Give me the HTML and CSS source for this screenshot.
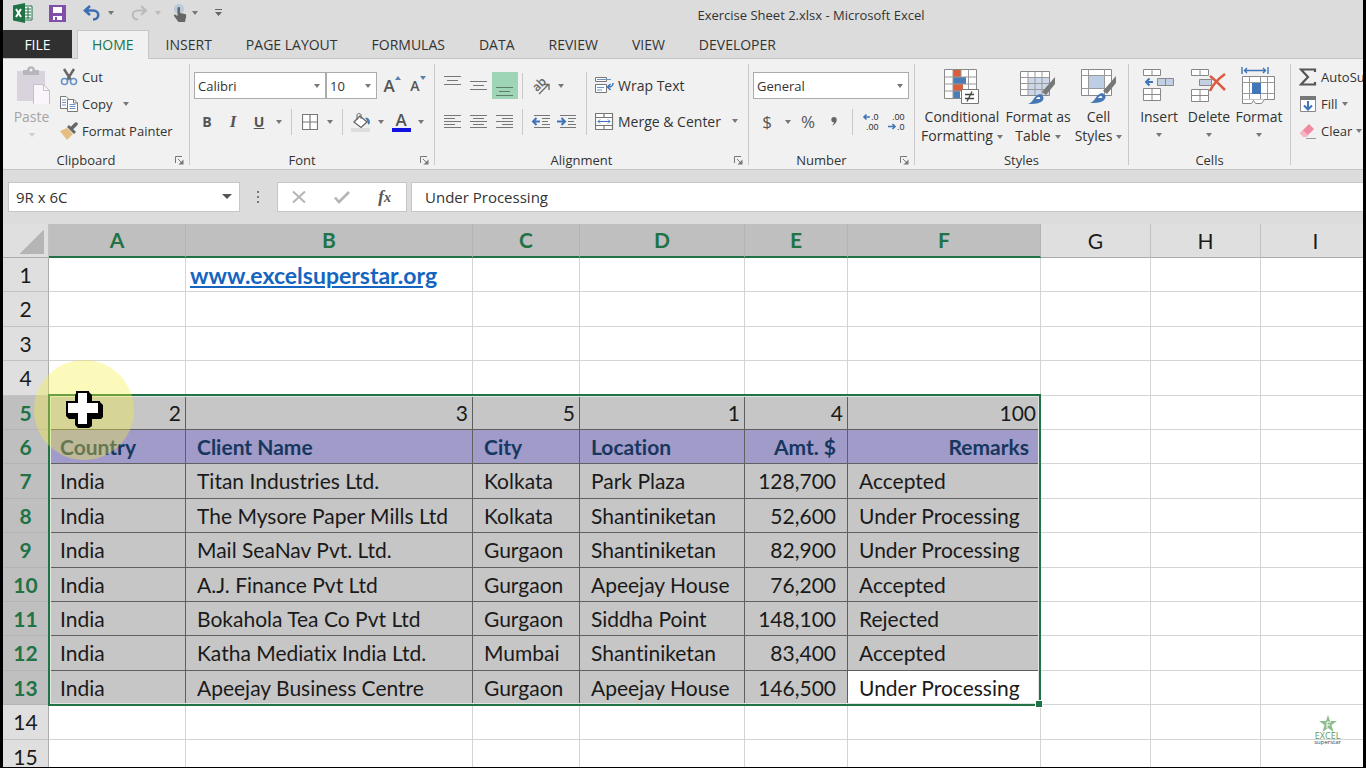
FILE: index.html
```html
<!DOCTYPE html>
<html lang="en">
<head>
    <meta charset="UTF-8">
    <meta name="viewport" content="width=device-width, initial-scale=1.0">
    <title>Exercise Sheet 2.xlsx - Microsoft Excel</title>
    <link rel="stylesheet" href="styles.css">
</head>
<body>
    <div class="app">
        <!-- Title bar -->
        <header class="titlebar">
            <div class="quick-access">
                <svg class="app-icon" width="20" height="20" viewBox="0 0 20 20"><path d="M11 3h8v14h-8z" fill="#fff" stroke="#1f7244"/><path d="M12 6h6M12 9h6M12 12h6M12 15h6M15 4v12" stroke="#1f7244"/><path d="M0 2.500 12 0v20L0 17.500z" fill="#1f7244"/><path d="M3 6l5 8M8 6l-5 8" stroke="#fff" stroke-width="2"/></svg>
                <button class="qa-btn save" aria-label="Save"><svg width="17" height="17" viewBox="0 0 17 17"><path d="M1 1h15v15H1z" fill="#fff" stroke="#8050a8" stroke-width="2"/><path d="M1 1h3v7h9V1h3v15h-3v-5H4v5H1z" fill="#8050a8"/><path d="M6 12h2v4H6z" fill="#8050a8"/></svg></button>
                <button class="qa-btn undo" aria-label="Undo"><svg width="18" height="16" viewBox="0 0 18 16"><path d="M7 1 2 5.500 7 10M2.500 5.500H10c7 0 7 9 0 9" fill="none" stroke="#3c6eb4" stroke-width="2.600"/></svg><span class="caret"></span></button>
                <button class="qa-btn redo" aria-label="Redo" disabled><svg width="18" height="16" viewBox="0 0 18 16"><path d="M11 1l5 4.500L11 10M15.500 5.500H8c-7 0-7 9 0 9" fill="none" stroke="#bbb" stroke-width="2.200"/></svg><span class="caret"></span></button>
                <button class="qa-btn touch" aria-label="Touch mode"><svg width="16" height="20" viewBox="0 0 16 20"><circle cx="7" cy="6" r="5" fill="#b9cadb"/><path d="M5.500 5c0-1.500 2.500-1.500 2.500 0v5l5 1c1 .3 1.300 1 1.200 2L13 19H6.500L2 13c-.5-1 .5-2 1.500-1.200l2 1.200z" fill="#666"/></svg><span class="caret"></span></button>
                <button class="qa-btn" aria-label="Customize toolbar"><svg width="8" height="8" viewBox="0 0 8 8"><path d="M0 .5h7" stroke="#666"/><path d="M0 3h7L3.500 7z" fill="#666"/></svg></button>
            </div>
            <h1 class="title">Exercise Sheet 2.xlsx - Microsoft Excel</h1>
        </header>

        <!-- Ribbon tabs -->
        <nav class="tabs">
            <button class="tab tab-file">FILE</button>
            <button class="tab active">HOME</button>
            <button class="tab">INSERT</button>
            <button class="tab">PAGE LAYOUT</button>
            <button class="tab">FORMULAS</button>
            <button class="tab">DATA</button>
            <button class="tab">REVIEW</button>
            <button class="tab">VIEW</button>
            <button class="tab">DEVELOPER</button>
        </nav>

        <!-- Ribbon -->
        <section class="ribbon">
            <div class="group clipboard">
                <div class="group-body">
                    <button class="big-btn paste" disabled>
                        <svg width="36" height="38" viewBox="0 0 36 38"><path d="M3 5h28v30H3z" fill="#d8d3dc"/><path d="M9 4h4c0-5 8-5 8 0h4v5H9z" fill="#b9b5bc"/><circle cx="17" cy="4" r="1.500" fill="#f1f1f1"/><path d="M19.500 18.500h10l6 6v14h-16z" fill="#faf5fb" stroke="#c5bfc8"/><path d="M29.500 18.500v6h6" fill="none" stroke="#c5bfc8"/></svg>
                        <span>Paste</span>
                        <span class="caret"></span>
                    </button>
                    <div class="list">
                        <button class="list-btn"><svg width="18" height="18" viewBox="0 0 18 18"><path d="M4 1l7 11M14 1L7 12" stroke="#666" stroke-width="2.400"/><circle cx="4.500" cy="13.500" r="3" fill="none" stroke="#6b93c6" stroke-width="1.600"/><circle cx="13.500" cy="13.500" r="3" fill="none" stroke="#6b93c6" stroke-width="1.600"/></svg>Cut</button>
                        <button class="list-btn"><svg width="18" height="18" viewBox="0 0 18 18"><path d="M.5 1.500H6l3 3v9H.5z" fill="#fff" stroke="#777"/><path d="M2 5h4M2 7.500h4M2 10h4" stroke="#6b93c6"/><path d="M7.500 4.500H14l3.500 3.500v8.500h-10z" fill="#fff" stroke="#777"/><path d="M13.500 4.500V8h4" fill="none" stroke="#777"/><path d="M9.500 9.500h6M9.500 11.500h6M9.500 13.500h6" stroke="#6b93c6"/></svg>Copy<span class="caret"></span></button>
                        <button class="list-btn"><svg width="18" height="18" viewBox="0 0 18 18"><path d="M0 9l7-3 6 6-6 6z" fill="#e6be80"/><path d="M7 5l2-2 7 7-2 2z" fill="#666"/><path d="M12 6l4-4" stroke="#666" stroke-width="3.500" stroke-linecap="round"/></svg>Format Painter</button>
                    </div>
                </div>
                <footer class="group-name">Clipboard<button class="launcher" aria-label="Clipboard options"><svg width="9" height="9" viewBox="0 0 9 9"><path d="M.5 7V.5H7M3 3l3 3" fill="none" stroke="#777"/><path d="M8.500 3.500v5h-5z" fill="#777"/></svg></button></footer>
            </div>

            <div class="group font">
                <div class="group-body rows">
                    <div class="row">
                        <div class="combo font-name"><select aria-label="Font"><option>Calibri</option></select></div>
                        <div class="combo font-size"><select aria-label="Font size"><option>10</option></select></div>
                        <button class="tool grow" aria-label="Increase font size"><span class="letter">A</span><svg width="6" height="4" viewBox="0 0 6 4"><path d="M0 4l3-4 3 4z" fill="#5c7fae"/></svg></button>
                        <button class="tool shrink" aria-label="Decrease font size"><span class="letter">A</span><svg width="6" height="4" viewBox="0 0 6 4"><path d="M0 0h6L3 4z" fill="#5c7fae"/></svg></button>
                    </div>
                    <div class="row">
                        <button class="tool"><b>B</b></button>
                        <button class="tool italic"><i>I</i></button>
                        <button class="tool underline"><u>U</u></button>
                        <button class="drop" aria-label="Underline style"><span class="caret"></span></button>
                        <span class="sep"></span>
                        <button class="tool" aria-label="Borders"><svg width="16" height="16" viewBox="0 0 16 16"><path d="M.5.5h15v15H.5zM8 .5v15M.5 8h15" fill="#fff" stroke="#777" stroke-width="1.200"/></svg></button>
                        <button class="drop" aria-label="Border style"><span class="caret"></span></button>
                        <span class="sep"></span>
                        <button class="tool" aria-label="Fill color"><svg width="20" height="20" viewBox="0 0 20 20"><path d="M0 16h19v4H0z" fill="#ddd"/><path d="M9 4l7 6-6 5.500L3 10z" fill="#fff" stroke="#666" stroke-width="1.300"/><path d="M6 8V3c0-2 4-2 4 0v4" fill="none" stroke="#666"/><path d="M14 6c3-1 5 1 5 5l-2 2c0-3-1-5-3-7z" fill="#4779b4"/></svg></button>
                        <button class="drop" aria-label="Fill colors"><span class="caret"></span></button>
                        <button class="tool color" aria-label="Font color"><span class="letter">A</span></button>
                        <button class="drop" aria-label="Font colors"><span class="caret"></span></button>
                    </div>
                </div>
                <footer class="group-name">Font<button class="launcher" aria-label="Font options"><svg width="9" height="9" viewBox="0 0 9 9"><path d="M.5 7V.5H7M3 3l3 3" fill="none" stroke="#777"/><path d="M8.500 3.500v5h-5z" fill="#777"/></svg></button></footer>
            </div>

            <div class="group alignment">
                <div class="group-body">
                    <div class="rows align-tools">
                        <div class="row">
                            <button class="tool" aria-label="Top align"><svg width="18" height="20" viewBox="0 0 18 20"><path d="M0 .5h17M3 4.500h11M0 8.500h17" stroke="#777"/></svg></button>
                            <button class="tool" aria-label="Middle align"><svg width="18" height="20" viewBox="0 0 18 20"><path d="M0 5.500h17M3 9.500h11M0 13.500h17" stroke="#777"/></svg></button>
                            <button class="tool on" aria-label="Bottom align"><svg width="18" height="20" viewBox="0 0 18 20"><path d="M0 11.500h17M3 15.500h11M0 19.500h17" stroke="#5f7f6d"/></svg></button>
                            <span class="sep"></span>
                            <button class="tool" aria-label="Orientation"><svg width="26" height="26" viewBox="0 0 26 26"><text x="5" y="16" transform="rotate(-45 11 13)" class="angle">ab</text><path d="M11 21l9-9M15.500 11.500H21V17" fill="none" stroke="#666" stroke-width="1.300"/></svg></button>
                            <button class="drop" aria-label="Orientation options"><span class="caret"></span></button>
                        </div>
                        <div class="row">
                            <button class="tool" aria-label="Align left"><svg width="18" height="14" viewBox="0 0 18 14"><path d="M0 .5h17M0 3.500h11M0 6.500h17M0 9.500h11M0 12.500h17" stroke="#777"/></svg></button>
                            <button class="tool" aria-label="Center"><svg width="18" height="14" viewBox="0 0 18 14"><path d="M0 .5h17M3 3.500h11M0 6.500h17M3 9.500h11M0 12.500h17" stroke="#777"/></svg></button>
                            <button class="tool" aria-label="Align right"><svg width="18" height="14" viewBox="0 0 18 14"><path d="M0 .5h17M6 3.500h11M0 6.500h17M6 9.500h11M0 12.500h17" stroke="#777"/></svg></button>
                            <span class="sep"></span>
                            <button class="tool" aria-label="Decrease indent"><svg width="20" height="14" viewBox="0 0 20 14"><path d="M3 .5h16M11 3.500h8M11 6.500h6M11 9.500h8M3 12.500h16" stroke="#777"/><path d="M9 6.500H2M5.500 3L2 6.500 5.500 10" fill="none" stroke="#3f75b8" stroke-width="2"/></svg></button>
                            <button class="tool" aria-label="Increase indent"><svg width="20" height="14" viewBox="0 0 20 14"><path d="M3 .5h16M11 3.500h8M11 6.500h6M11 9.500h8M3 12.500h16" stroke="#777"/><path d="M0 6.500h7M4.500 3L8 6.500 4.500 10" fill="none" stroke="#3f75b8" stroke-width="2"/></svg></button>
                        </div>
                    </div>
                    <div class="rows wrap-tools">
                        <button class="list-btn"><svg width="19" height="19" viewBox="0 0 19 19"><path d="M.5 1.500h11v4H.5zM.5 8.500h11v8H.5z" fill="#fff" stroke="#777"/><path d="M2 3.500h14M2 11.500h7M2 14h5" stroke="#6b93c6"/><path d="M18 7c0 3-1 4-5 4M15.500 8L12.500 11l3 3" fill="none" stroke="#3f75b8" stroke-width="1.500"/></svg>Wrap Text</button>
                        <button class="list-btn"><svg width="19" height="19" viewBox="0 0 19 19"><path d="M.5 1.500h17v16H.5zM.5 5.500h17M.5 13.500h17M9 1.500v4M9 13.500v4" fill="#fff" stroke="#777" stroke-width="1.200"/><path d="M3 9.500h12M5 7.500l-2 2 2 2M13 7.500l2 2-2 2" fill="none" stroke="#3f75b8"/></svg>Merge &amp; Center<span class="caret"></span></button>
                    </div>
                </div>
                <footer class="group-name">Alignment<button class="launcher" aria-label="Alignment options"><svg width="9" height="9" viewBox="0 0 9 9"><path d="M.5 7V.5H7M3 3l3 3" fill="none" stroke="#777"/><path d="M8.500 3.500v5h-5z" fill="#777"/></svg></button></footer>
            </div>

            <div class="group number">
                <div class="group-body rows">
                    <div class="row">
                        <div class="combo number-format"><select aria-label="Number format"><option>General</option></select></div>
                    </div>
                    <div class="row">
                        <button class="tool sign">$</button>
                        <button class="drop" aria-label="Currencies"><span class="caret"></span></button>
                        <button class="tool sign">%</button>
                        <button class="tool comma" aria-label="Comma style"><svg width="7" height="9" viewBox="0 0 7 9"><path d="M3 0c4 0 4 6-2 9 1.500-2 2-3 1.500-4C-.5 5-.5 0 3 0z" fill="#666"/></svg></button>
                        <span class="sep"></span>
                        <button class="tool decimals" aria-label="Increase decimal"><svg width="20" height="22" viewBox="0 0 20 22"><path d="M9 6H3M5.500 3.500L3 6l2.500 2.500" fill="none" stroke="#3f75b8" stroke-width="1.600"/><text x="10" y="9">.0</text><text x="5" y="19">.00</text></svg></button>
                        <button class="tool decimals" aria-label="Decrease decimal"><svg width="20" height="22" viewBox="0 0 20 22"><path d="M1 15.500h7M5.500 13L8 15.500 5.500 18" fill="none" stroke="#3f75b8" stroke-width="1.600"/><text x="5" y="9">.00</text><text x="10" y="19">.0</text></svg></button>
                    </div>
                </div>
                <footer class="group-name">Number<button class="launcher" aria-label="Number options"><svg width="9" height="9" viewBox="0 0 9 9"><path d="M.5 7V.5H7M3 3l3 3" fill="none" stroke="#777"/><path d="M8.500 3.500v5h-5z" fill="#777"/></svg></button></footer>
            </div>

            <div class="group styles">
                <div class="group-body">
                    <button class="big-btn conditional">
                        <svg width="36" height="38" viewBox="0 0 36 38"><path d="M.5 3.500h32v29H.5z" fill="#fff" stroke="#888"/><path d="M9 4h8v7H9z" fill="#d75f3c"/><path d="M9 11h13v7H9z" fill="#4a7db8"/><path d="M9 18h10v7H9z" fill="#d75f3c"/><path d="M9 25h7v7H9z" fill="#4a7db8"/><path d="M9 3.500v29M24.500 3.500v29M17 3.500v7M.5 11h32M.5 18h32M.5 25h32" fill="none" stroke="#999"/><path d="M17.500 23.500h17v14h-17z" fill="#fff" stroke="#777"/><path d="M21 28.500h9M21 32.500h9M28 25.500l-5 10" stroke="#444" stroke-width="1.300"/></svg>
                        <span>Conditional</span>
                        <span>Formatting<span class="caret"></span></span>
                    </button>
                    <button class="big-btn table-format">
                        <svg width="36" height="38" viewBox="0 0 36 38"><path d="M.5 5.500h29v24H.5z" fill="#fff" stroke="#888"/><path d="M8 12h21v17H8z" fill="#ccd7ea"/><path d="M.5 11.500h29M.5 17.500h29M.5 23.500h29M8 5.500v24M15 5.500v24M22 5.500v24" stroke="#999"/><path d="M35 11v7l-9 11-4-3z" fill="#777"/><path d="M8 38c5-1 6-9 12-10 4 1 5 6 1 8-4 2-8 2-13 2z" fill="#4578b5"/><path d="M16 33c2-3 5-2 4 0z" fill="#fff"/></svg>
                        <span>Format as</span>
                        <span>Table<span class="caret"></span></span>
                    </button>
                    <button class="big-btn cell-styles">
                        <svg width="36" height="38" viewBox="0 0 36 38"><path d="M.5 3.500h30v26H.5z" fill="#fff" stroke="#888"/><path d="M8 10h15v12H8z" fill="#bccde4"/><path d="M.5 9.500h30M.5 22.500h30M7.500 3.500v26M23.500 3.500v26" stroke="#999"/><path d="M35 10v7l-9 11-4-3z" fill="#777"/><path d="M9 37c5-1 6-9 12-10 4 1 5 5 1 8-4 2-8 2-13 2z" fill="#4578b5"/><path d="M17 32c2-3 5-2 4 0z" fill="#fff"/></svg>
                        <span>Cell</span>
                        <span>Styles<span class="caret"></span></span>
                    </button>
                </div>
                <footer class="group-name">Styles</footer>
            </div>

            <div class="group cells">
                <div class="group-body">
                    <button class="big-btn">
                        <svg width="32" height="38" viewBox="0 0 32 38"><path d="M.5 3.500h17v6H.5zM9 3.500v6M.5 22.500h17v12H.5zM9 22.500v12M.5 28.500h17" fill="#fff" stroke="#888"/><path d="M14.500 12.500h16v7h-16zM22.500 12.500v7" fill="#c3cfe2" stroke="#888"/><path d="M10 16H3M6.500 12.500L3 16l3.500 3.500" fill="none" stroke="#3f75b8" stroke-width="2"/></svg>
                        <span>Insert</span>
                        <span class="caret"></span>
                    </button>
                    <button class="big-btn">
                        <svg width="36" height="38" viewBox="0 0 36 38"><path d="M.5 3.500h17v6H.5zM9 3.500v6M.5 23.500h17v12H.5zM9 23.500v12M.5 29.500h17" fill="#fff" stroke="#888"/><path d="M8.500 13.500h12v6h-12z" fill="#c3cfe2" stroke="#888"/><path d="M19 10c4 3 9 8 15 14M34 8c-7 5-12 10-15 17" fill="none" stroke="#dc5a3f" stroke-width="2.600"/></svg>
                        <span>Delete</span>
                        <span class="caret"></span>
                    </button>
                    <button class="big-btn">
                        <svg width="36" height="38" viewBox="0 0 36 38"><path d="M1 1v7M27 1v7M3 4.500h22M6 2L3.500 4.500 6 7M22 2l2.500 2.500L22 7" fill="none" stroke="#3f75b8" stroke-width="1.400"/><path d="M1.500 10.500h32v23h-32z" fill="#fff" stroke="#888"/><path d="M8.500 10.500v23M26.500 10.500v23M1.500 16.500h32M1.500 27.500h32M19.500 10.500v6M19.500 27.500v6" stroke="#999"/><path d="M11 17h9v11h-9z" fill="#4177b8"/><path d="M1.500 33.500v4h9l2-3 2 3h6l3-4" fill="#fff" stroke="#888"/></svg>
                        <span>Format</span>
                        <span class="caret"></span>
                    </button>
                </div>
                <footer class="group-name">Cells</footer>
            </div>

            <div class="group editing">
                <div class="group-body">
                    <div class="list">
                        <button class="list-btn"><svg width="18" height="18" viewBox="0 0 18 18"><path d="M16 4V1.500H2L9 9l-7 7.500h14V14" fill="none" stroke="#555" stroke-width="2.200"/></svg>AutoSum<span class="caret"></span></button>
                        <button class="list-btn"><svg width="18" height="18" viewBox="0 0 18 18"><path d="M1.500 1.500h15v15h-15z" fill="#fff" stroke="#888"/><path d="M1 1h16v4H1z" fill="#777"/><path d="M9 6v8M5 10.500L9 14.500l4-4" fill="none" stroke="#3f75b8" stroke-width="2"/></svg>Fill<span class="caret"></span></button>
                        <button class="list-btn"><svg width="18" height="18" viewBox="0 0 18 18"><path d="M1 11l9-9 5 5-7 7H4z" fill="#ee8aa2"/><path d="M1 11l3-3 5 5-1 2H4z" fill="#f7b5c4"/><path d="M7 16.500h10" stroke="#999"/></svg>Clear<span class="caret"></span></button>
                    </div>
                </div>
            </div>
        </section>

        <!-- Formula bar -->
        <section class="formula-bar">
            <div class="combo name-box"><input type="text" value="9R x 6C" aria-label="Name box"></div>
            <svg class="grip" width="4" height="14" viewBox="0 0 4 14"><path d="M1 1h2v2H1zM1 6h2v2H1zM1 11h2v2H1z" fill="#777"/></svg>
            <div class="formula-tools">
                <button aria-label="Cancel"><svg width="14" height="14" viewBox="0 0 14 14"><path d="M1 1.500l12 11M13 1.500l-12 11" stroke="#b5b5b5" stroke-width="2"/></svg></button>
                <button aria-label="Enter"><svg width="16" height="14" viewBox="0 0 16 14"><path d="M1 7.500l4 4.500L15 2" fill="none" stroke="#b5b5b5" stroke-width="2.600"/></svg></button>
                <button class="fx" aria-label="Insert function">f<small>x</small></button>
            </div>
            <input class="formula" type="text" value="Under Processing" aria-label="Formula">
        </section>

        <!-- Worksheet -->
        <main class="sheet">
            <table class="grid">
                <colgroup>
                    <col class="c-head"><col class="c-a"><col class="c-b"><col class="c-c"><col class="c-d"><col class="c-e"><col class="c-f"><col class="c-rest"><col class="c-rest"><col class="c-rest">
                </colgroup>
                <thead>
                    <tr><th class="corner"></th><th class="sel">A</th><th class="sel">B</th><th class="sel">C</th><th class="sel">D</th><th class="sel">E</th><th class="sel">F</th><th>G</th><th>H</th><th>I</th></tr>
                </thead>
                <tbody>
                    <tr><th>1</th><td></td><td class="link"><a href="#">www.excelsuperstar.org</a></td><td></td><td></td><td></td><td></td><td></td><td></td><td></td></tr>
                    <tr><th>2</th><td></td><td></td><td></td><td></td><td></td><td></td><td></td><td></td><td></td></tr>
                    <tr><th>3</th><td></td><td></td><td></td><td></td><td></td><td></td><td></td><td></td><td></td></tr>
                    <tr><th>4</th><td></td><td></td><td></td><td></td><td></td><td></td><td></td><td></td><td></td></tr>
                    <tr class="picked order"><th>5</th><td>2</td><td>3</td><td>5</td><td>1</td><td>4</td><td>100</td><td></td><td></td><td></td></tr>
                    <tr class="picked heading"><th>6</th><td>Country</td><td>Client Name</td><td>City</td><td>Location</td><td class="num">Amt. $</td><td class="num">Remarks</td><td></td><td></td><td></td></tr>
                    <tr class="picked"><th>7</th><td>India</td><td>Titan Industries Ltd.</td><td>Kolkata</td><td>Park Plaza</td><td class="num">128,700</td><td>Accepted</td><td></td><td></td><td></td></tr>
                    <tr class="picked"><th>8</th><td>India</td><td>The Mysore Paper Mills Ltd</td><td>Kolkata</td><td>Shantiniketan</td><td class="num">52,600</td><td>Under Processing</td><td></td><td></td><td></td></tr>
                    <tr class="picked"><th>9</th><td>India</td><td>Mail SeaNav Pvt. Ltd.</td><td>Gurgaon</td><td>Shantiniketan</td><td class="num">82,900</td><td>Under Processing</td><td></td><td></td><td></td></tr>
                    <tr class="picked"><th>10</th><td>India</td><td>A.J. Finance Pvt Ltd</td><td>Gurgaon</td><td>Apeejay House</td><td class="num">76,200</td><td>Accepted</td><td></td><td></td><td></td></tr>
                    <tr class="picked"><th>11</th><td>India</td><td>Bokahola Tea Co Pvt Ltd</td><td>Gurgaon</td><td>Siddha Point</td><td class="num">148,100</td><td>Rejected</td><td></td><td></td><td></td></tr>
                    <tr class="picked"><th>12</th><td>India</td><td>Katha Mediatix India Ltd.</td><td>Mumbai</td><td>Shantiniketan</td><td class="num">83,400</td><td>Accepted</td><td></td><td></td><td></td></tr>
                    <tr class="picked"><th>13</th><td>India</td><td>Apeejay Business Centre</td><td>Gurgaon</td><td>Apeejay House</td><td class="num">146,500</td><td class="current">Under Processing</td><td></td><td></td><td></td></tr>
                    <tr><th>14</th><td></td><td></td><td></td><td></td><td></td><td></td><td></td><td></td><td></td></tr>
                    <tr><th>15</th><td></td><td></td><td></td><td></td><td></td><td></td><td></td><td></td><td></td></tr>
                </tbody>
            </table>

            <div class="selection"><span class="handle"></span></div>
            <div class="spotlight"></div>
            <svg class="cursor" width="42" height="42" viewBox="0 0 42 42"><path d="M14 4h12l3 3v6h7l4 4v12l-2 2h-9v7l-3 2H15l-3-3v-6H6l-3-3V16h9V7z" fill="#000"/><path d="M14 4h11v10h11v12H25v11H14V26H4V14h10z" fill="#fff" stroke="#000" stroke-width="2"/></svg>

            <div class="watermark">
                <svg width="18" height="17" viewBox="0 0 18 17"><path d="M9 0l2 6h7l-5.500 4 2 7L9 13l-5.500 4 2-7L0 6h7z" fill="#8dbd8c"/><path d="M8 7h4M8 7v6M8 10h3" stroke="#fff"/></svg>
                <span class="wm-name">EXCEL</span>
                <span class="wm-sub">superstar</span>
            </div>
        </main>
    </div>
</body>
</html>
```

FILE: styles.css
```css
* {
    box-sizing: border-box;
}

body {
    margin: 0;
    background-color: #000;
    color: #333;
    font-family: "Open Sans", "Noto Sans", sans-serif;
    font-size: 13px;
    overflow: hidden;
}

button, input, select {
    font: inherit;
    color: inherit;
    margin: 0;
    padding: 0;
    border: none;
    background: none;
}

svg {
    display: block;
    flex: none;
}

.app {
    display: flex;
    flex-direction: column;
    height: calc(100vh - 1px);
    margin: 0 3px;
    background-color: #dcdcdc;
    overflow: hidden;
}

.caret {
    display: inline-block;
    border: 3px solid transparent;
    border-top: 4px solid #777;
    border-bottom: none;
    flex: none;
}

/* title bar */
.titlebar {
    display: flex;
    align-items: flex-start;
    height: 30px;
}

.quick-access {
    display: flex;
    align-items: center;
    width: 256px;
    height: 26px;
    padding-left: 10px;
}

.qa-btn {
    display: flex;
    align-items: center;
    gap: 7px;
}

.save {
    margin-left: 16px;
}

.undo {
    margin-left: 17px;
}

.redo {
    margin-left: 16px;
}

.redo .caret {
    border-top-color: #bbb;
}

.touch {
    gap: 4px;
    margin: 0 17px 0 11px;
}

.title {
    flex: 1;
    margin: 0;
    font-size: 13px;
    line-height: 30px;
    font-weight: 400;
    text-align: center;
}

/* tabs */
.tabs {
    display: flex;
    height: 29px;
    border-bottom: 1px solid #c6c6c6;
    font-size: 14px;
}

.tab {
    padding: 0 17px;
    white-space: nowrap;
}

.tab-file {
    width: 69px;
    margin-right: 5px;
    background-color: #303030;
    color: #fff;
}

.tab.active {
    height: 29px;
    padding: 0 14px 1px;
    border: 1px solid #c6c6c6;
    border-bottom: none;
    background-color: #f1f1f1;
    color: #217346;
}

/* ribbon */
.ribbon {
    display: flex;
    flex: none;
    padding: 5px 0 4px;
    border-bottom: 1px solid #c6c6c6;
    background-color: #f1f1f1;
    overflow: hidden;
}

.group {
    display: flex;
    flex-direction: column;
    flex: none;
    height: 101px;
    border-right: 1px solid #c8c8c8;
}

.group-body {
    display: flex;
    flex: 1;
}

.group-name {
    position: relative;
    height: 13px;
    line-height: 16px;
    text-align: center;
    padding-right: 20px;
}

.launcher {
    position: absolute;
    right: 5px;
    top: 4px;
}

.clipboard { width: 187px; }
.font { width: 245px; }
.alignment { width: 314px; }
.number { width: 166px; }
.styles { width: 214px; }
.cells { width: 162px; }
.editing { width: 110px; border-right: none; }

.styles .group-name,
.cells .group-name {
    padding-right: 0;
}

.rows {
    display: flex;
    flex-direction: column;
    gap: 9px;
    padding: 8px 0 0 4px;
}

.row {
    display: flex;
    align-items: center;
    height: 27px;
}

.tool {
    display: flex;
    align-items: center;
    justify-content: center;
    width: 26px;
    height: 27px;
    font-size: 14px;
    color: #555;
}

.tool.on {
    background-color: #9fd5b7;
}

.italic {
    font-family: "Liberation Serif", serif;
    font-size: 17px;
    font-weight: 700;
}

.underline {
    font-weight: 700;
}

.drop {
    display: flex;
    align-items: center;
    justify-content: center;
    width: 14px;
    height: 27px;
}

.sep {
    width: 1px;
    height: 26px;
    margin: 0 5px;
    background-color: #c8c8c8;
}

.combo {
    position: relative;
    height: 27px;
    border: 1px solid #ababab;
    background-color: #fff;
}

.combo::after {
    content: "";
    position: absolute;
    right: 5px;
    top: 11px;
    border: 3px solid transparent;
    border-top: 4px solid #777;
    border-bottom: none;
    pointer-events: none;
}

.combo select,
.combo input {
    display: block;
    width: 100%;
    height: 100%;
    padding: 0 3px;
    appearance: none;
}

.font-name { width: 132px; }
.font-size { width: 51px; margin-right: 2px; }
.number-format { width: 156px; }

.grow,
.shrink {
    align-items: flex-start;
}

.grow .letter,
.shrink .letter {
    font-weight: 600;
    line-height: 27px;
}

.grow .letter {
    font-size: 17px;
}

.shrink .letter {
    font-size: 14px;
}

.grow svg,
.shrink svg {
    margin-top: 4px;
}

.color .letter {
    width: 19px;
    border-bottom: 4px solid #1212e0;
    font-size: 17px;
    line-height: 16px;
    font-weight: 600;
}

.sign {
    font-size: 17px;
}

.number .sign:first-child {
    width: 28px;
}

.align-tools {
    width: 151px;
    padding-left: 5px;
}

.align-tools .sep {
    margin: 0 5px 0 4px;
}

.angle {
    font-size: 12px;
    font-weight: 600;
    fill: #666;
}

.decimals text {
    font-family: "Liberation Sans", sans-serif;
    font-size: 9px;
    fill: #333;
}

.wrap-tools {
    padding-left: 8px;
    margin-top: 8px;
    padding-top: 0;
    height: 63px;
    border-left: 1px solid #c8c8c8;
    font-size: 14px;
}

.list {
    display: flex;
    flex-direction: column;
}

.list-btn {
    display: flex;
    align-items: center;
    gap: 4px;
    height: 27px;
    padding-bottom: 1px;
    white-space: nowrap;
}

.list-btn .caret {
    margin-left: 7px;
}

.editing .list {
    padding-left: 8px;
}

.editing .list-btn .caret {
    margin-left: 0;
}

.big-btn {
    display: flex;
    flex-direction: column;
    align-items: center;
    width: 50px;
    padding-top: 2px;
    font-size: 14px;
    line-height: 19px;
    white-space: nowrap;
}

.big-btn svg {
    margin-bottom: 3px;
}

.big-btn > .caret {
    margin-top: 7px;
}

.big-btn span .caret {
    margin: 0 0 2px 4px;
}

.paste {
    width: 57px;
    color: #a5a5a5;
}

.paste .caret {
    border-top-color: #ccc;
}

.styles .group-body,
.cells .group-body {
    padding-left: 5px;
}

.conditional { width: 84px; }
.table-format { width: 68px; }
.cell-styles { width: 53px; }

/* formula bar */
.formula-bar {
    display: flex;
    align-items: center;
    flex: none;
    height: 54px;
    padding-left: 5px;
    font-size: 15px;
}

.name-box {
    width: 232px;
    height: 30px;
    border-color: #c6c6c6;
}

.name-box::after {
    right: 7px;
    border-width: 5px 5px 0;
    border-top-color: #555;
}

.combo.name-box input {
    padding: 0 7px;
}

.grip {
    margin: 0 17px 0 16px;
}

.formula-tools {
    display: flex;
    width: 130px;
    height: 30px;
    margin-right: 4px;
    border: 1px solid #c6c6c6;
    background-color: #fff;
}

.formula-tools button {
    display: flex;
    flex: 1;
    align-items: center;
    justify-content: center;
}

.formula-tools .fx {
    font-family: "Liberation Serif", serif;
    font-size: 17px;
    font-style: italic;
    font-weight: 700;
    color: #555;
}

.formula {
    flex: 1;
    height: 30px;
    padding: 0 13px;
    border: 1px solid #c6c6c6;
    border-right: none;
    background-color: #fff;
}

/* worksheet */
.sheet {
    position: relative;
    flex: 1;
    overflow: hidden;
    background-color: #fff;
    font-family: Lato, "Open Sans", sans-serif;
    font-size: 21px;
    font-variant-ligatures: none;
    color: #1a1a1a;
}

.grid {
    width: 1368px;
    border-collapse: separate;
    border-spacing: 0;
    table-layout: fixed;
}

.c-head { width: 46px; }
.c-a { width: 137px; }
.c-b { width: 287px; }
.c-c { width: 107px; }
.c-d { width: 165px; }
.c-e { width: 103px; }
.c-f { width: 193px; }
.c-rest { width: 110px; }

.grid th,
.grid td {
    height: 34px;
    padding: 0;
    border-right: 1px solid #d4d4d4;
    border-bottom: 1px solid #d4d4d4;
    line-height: 30px;
    white-space: nowrap;
}

.grid tbody tr:nth-child(5n+2) > *,
.grid tbody tr:nth-child(5n+4) > * {
    height: 35px;
}

.grid th {
    background-color: #dfdfdf;
    border-color: #c2c2c2;
    font-weight: 400;
}

.grid thead th {
    border-bottom-color: #ababab;
}

.grid thead .sel {
    background-color: #c0bfc0;
    border-right-color: #b3b3b3;
    border-bottom: 2px solid #217346;
    color: #217346;
    font-weight: 700;
}

.grid .corner {
    background-image: linear-gradient(to bottom right, transparent 50%, #b5b5b5 50%);
    background-size: 24px 24px;
    background-position: 17px 6px;
    background-repeat: no-repeat;
}

.grid tbody th {
    border-right-color: #ababab;
}

.grid .picked th {
    background-color: #c0bfc0;
    border-bottom-color: #b3b3b3;
    color: #217346;
    font-weight: 700;
}

.grid .picked td:nth-child(-n+7) {
    padding: 0 11px;
    border-color: #606060;
    background-color: #c6c6c6;
}

.grid .order td:nth-child(-n+7) {
    padding-right: 4px;
    text-align: right;
}

.grid .heading td:nth-child(-n+7) {
    background-color: #a09bc9;
    color: #17375e;
    font-weight: 700;
}

.grid .picked .num {
    text-align: right;
}

.grid .picked td.current {
    background-color: #fff;
}

.grid .link {
    padding-left: 4px;
    font-size: 23px;
    font-weight: 700;
}

.link a {
    color: #1565c0;
}

.selection {
    position: absolute;
    left: 45px;
    top: 170px;
    width: 993px;
    height: 312px;
    border: 2px solid #217346;
    box-shadow: inset 0 0 0 1px #dfe6e1;
}

.handle {
    position: absolute;
    right: -4px;
    bottom: -4px;
    width: 8px;
    height: 8px;
    border: 1px solid #fff;
    background-color: #217346;
}

.spotlight {
    position: absolute;
    left: 31px;
    top: 136px;
    width: 100px;
    height: 100px;
    border-radius: 50%;
    background-color: rgba(245, 240, 60, 0.35);
}

.cursor {
    position: absolute;
    left: 60px;
    top: 164px;
}

.watermark {
    position: absolute;
    right: 22px;
    bottom: 23px;
    display: flex;
    flex-direction: column;
    align-items: center;
    font-family: "Open Sans", sans-serif;
    color: #5f9b60;
}

.wm-name {
    font-size: 9px;
    line-height: 8px;
}

.wm-sub {
    font-size: 6px;
    line-height: 4px;
    color: #444;
}
```
